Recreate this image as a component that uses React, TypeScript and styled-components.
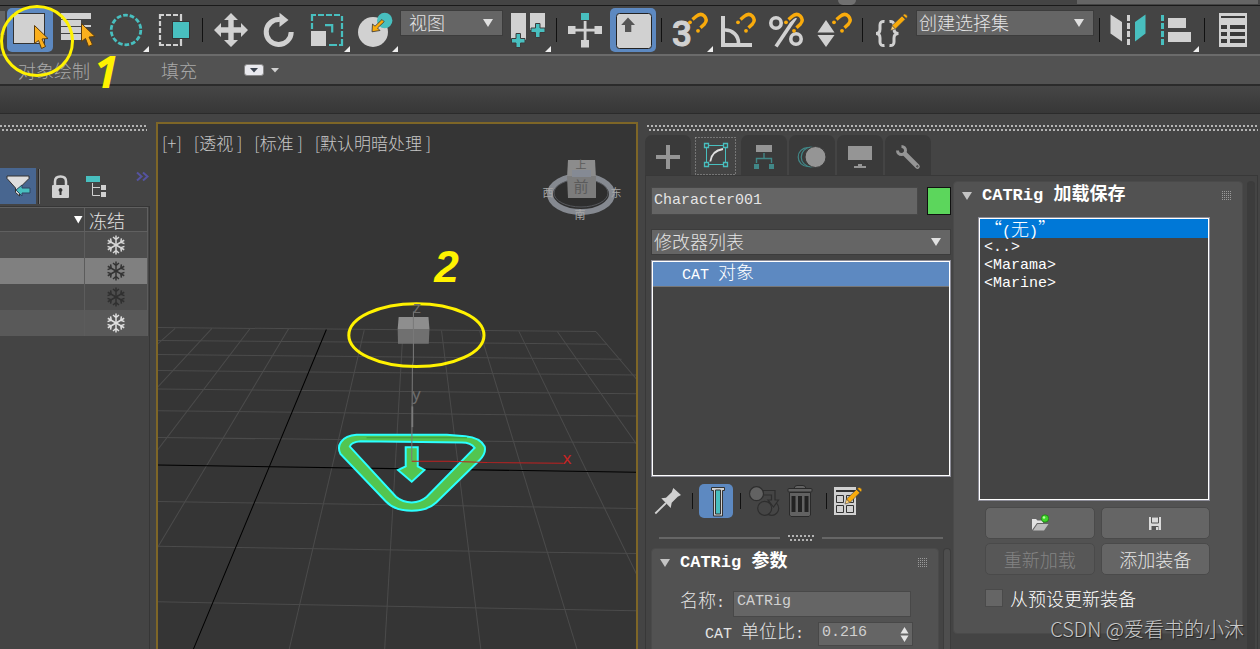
import React from "react";
import styled, { createGlobalStyle, css } from "styled-components";

const c = {
  base: "#444444",
  raised: "#525252",
  field: "#656565",
  edge: "#383838",
  light: "#d1d1d1",
  teal: "#48bfbf",
  orange: "#fbaf1c",
  amber: "#f9ab0c",
  blue: "#5d89c1",
  dim: "#959595",
  yellow: "#fff200",
};

const sans = `"Noto Sans CJK SC", "Noto Sans", sans-serif`;
const mono = `"Liberation Mono", "Noto Sans CJK SC", monospace`;

const GlobalStyle = createGlobalStyle`
  *, *::before, *::after { box-sizing: border-box; }
  body { margin: 0; background: ${c.base}; color: #e4e4e4; font-family: ${mono}; font-size: 15px; }
  button, input, select { font: inherit; color: inherit; margin: 0; padding: 0; border: 0; border-radius: 0; }
  svg { display: block; flex: none; }
`;

const Page = styled.div`
  position: relative;
  display: flex;
  flex-direction: column;
  min-height: 100vh;
  overflow: hidden;
`;

/* ---------- shared pieces ---------- */

const Dots = styled.div<{ $w?: number }>`
  height: 6px;
  width: ${(p) => (p.$w ? `${p.$w}px` : "auto")};
  flex: none;
  background:
    repeating-linear-gradient(90deg, #b4b4b4 0 2px, transparent 2px 4px) 0 0 / 100% 2px no-repeat,
    repeating-linear-gradient(90deg, transparent 0 2px, #b4b4b4 2px 4px) 0 4px / 100% 2px no-repeat;
`;

const Zh = styled.span`
  font-family: ${sans};
  font-size: 18px;
  font-weight: 300;
  line-height: 18px;
`;

const ToolButton = styled.button<{ $active?: boolean; $size?: "small" }>`
  flex: none;
  width: ${(p) => (p.$size ? 34 : 46)}px;
  height: ${(p) => (p.$size ? 34 : 44)}px;
  border-radius: 5px;
  background: ${(p) => (p.$active ? c.blue : "transparent")};
`;

const Divider = styled.span<{ $w: number; $h: number }>`
  flex: none;
  width: ${(p) => p.$w}px;
  height: ${(p) => p.$h}px;
  background: linear-gradient(#111, #111) center / 1px 100% no-repeat;
`;

const SelectFrame = styled.span<{ $w?: number; $h: number }>`
  display: grid;
  align-items: start;
  flex: none;
  width: ${(p) => (p.$w ? `${p.$w}px` : "100%")};
  height: ${(p) => p.$h}px;
  background: ${c.field};
  border: 1px solid #3c3c3c;
  & > * { grid-area: 1 / 1; }
  & > svg { place-self: center end; margin-right: 9px; pointer-events: none; }
`;

const NativeSelect = styled.select<{ $pad: number }>`
  appearance: none;
  width: 100%;
  height: 22px;
  padding-left: ${(p) => p.$pad}px;
  background: transparent;
  font-family: ${sans};
  font-size: 18px;
  font-weight: 300;
  line-height: 22px;
`;

function Select({ label, value, w, h, pad }: { label: string; value: string; w?: number; h: number; pad: number }) {
  return (
    <SelectFrame $w={w} $h={h}>
      <NativeSelect aria-label={label} $pad={pad} defaultValue={value}>
        <option>{value}</option>
      </NativeSelect>
      <svg width="10" height="8" viewBox="0 0 10 8"><path d="M0 0H10L5 8Z" fill="#e0e0e0" /></svg>
    </SelectFrame>
  );
}

/* ---------- icon fragments ---------- */

const Cursor = ({ x = 0, y = 0 }) => (
  <path transform={`translate(${x} ${y})`} d="M27.500 17.500V35.500L31.500 32.500L34.500 40.500L38.500 38.500L35 31L41 30.500Z" fill={c.orange} stroke="#5a3c10" />
);
const Corner = () => <path d="M46 38V44H40Z" fill="#eee" />;
const Magnet = () => (
  <g fill={c.amber}>
    <path d="M25.500 12L29.500 8.500Q33.500 5.500 37 8Q40.500 12 37.500 16L32.500 20.500" fill="none" stroke="#444" strokeWidth="5.500" />
    <path d="M25.500 11.500L29 8.500Q33.500 4.500 37.300 8Q41 12 37.500 16L33.500 19.700" fill="none" stroke={c.amber} strokeWidth="3.400" />
    <circle cx="23" cy="14.300" r="1.900" />
    <circle cx="31" cy="22.800" r="1.900" />
  </g>
);
const Pencil = ({ x, y }: { x: number; y: number }) => (
  <g transform={`translate(${x} ${y})`} stroke="#444" strokeWidth=".6">
    <path d="M0 0L1.500 -5L5 -1.500Z" fill="#ffd27a" />
    <path d="M1.500 -5L11.500 -14.500L14.800 -11.200L5 -1.500Z" fill={c.amber} />
    <path d="M12.300 -15.300Q14 -17.500 16 -15.800Q18 -14 15.800 -12Z" fill={c.amber} />
  </g>
);

const IconFrame = styled.svg`
  overflow: visible;
`;
const Icon = ({ children }: { children: React.ReactNode }) => (
  <IconFrame width="46" height="44" viewBox="0 0 46 44" fill={c.light}>{children}</IconFrame>
);

type Tool = { name: string; active?: boolean; icon: React.ReactNode };

const selectTools: Tool[] = [
  { name: "选择对象", active: true, icon: <><rect x="6.500" y="5.500" width="31" height="30" stroke="#333" /><Cursor /></> },
  { name: "按名称选择", icon: <><path d="M6 5H36V11H6ZM6 12H26V18H6ZM6 19H26V25H6ZM6 26H26V32H6ZM27 17H36V19H27Z" /><Cursor x={-1} y={-2} /></> },
  { name: "圆形选择区域", icon: <><circle cx="23" cy="22" r="14.800" fill="none" stroke={c.teal} strokeWidth="2.800" strokeDasharray="4.700 1.942" /><Corner /></> },
  {
    name: "窗口/交叉",
    icon: <>
      <path d="M13 7H9V11M9 13V18M9 20V25M9 27V32M9 34V37H13M15 37H20M22 37H27M29 37H30V31M15 7H20M22 7H27M29 7H30V13" fill="none" stroke={c.light} strokeWidth="2.200" />
      <rect x="21.500" y="13.500" width="17" height="17" fill={c.teal} stroke="#333" />
    </>,
  },
];

const transformTools: Tool[] = [
  { name: "移动", icon: <path d="M23 5L30 12H25.700V19.300H33V15L40 22L33 29V24.700H25.700V32H30L23 39L16 32H20.300V24.700H13V29L6 22L13 15V19.300H20.300V12H16Z" /> },
  { name: "旋转", icon: <><path d="M35.200 24A12.500 12.500 0 1 1 24 11.600" fill="none" stroke={c.light} strokeWidth="5" /><path d="M23.500 4.700L32.500 12L23.500 19Z" /></> },
  {
    name: "缩放",
    icon: <>
      <path d="M8 21V15M8 13V7H12M14 7H20M22 7H28M30 7H36M38 8V13M38 15V21M38 23V29M38 31V37H35M33 37H25" fill="none" stroke={c.teal} strokeWidth="2.200" />
      <rect x="7" y="23" width="15" height="15" />
      <path d="M21 17.200H28.200V24.500" fill="none" stroke={c.teal} strokeWidth="2.200" /><Corner />
    </>,
  },
  {
    name: "放置",
    icon: <>
      <circle cx="21" cy="24" r="15" /><circle cx="32.700" cy="12.500" r="7.700" fill={c.teal} />
      <path d="M30 11.500L32.200 13.700L25.500 20L28 22.500L20 23.800L20.500 16L23 18.200Z" fill={c.amber} stroke="#333" strokeWidth=".8" /><Corner />
    </>,
  },
];

const pivotTools: Tool[] = [
  {
    name: "使用轴点中心",
    icon: <>
      <path d="M6 5H21V32H6ZM25 5H40V22H25Z" />
      <g fill={c.teal} stroke="#3c3c3c">
        <path d="M11 25.500H15.500V30.500H20V35H15.500V39.500H11V35H6.500V30.500H11Z" />
        <path d="M30.500 15.500H35V20H40V24.500H35V29.500H30.500V24.500H26V20H30.500Z" />
      </g>
      <Corner />
    </>,
  },
];

const manipulateTools: Tool[] = [
  { name: "选择并操纵", icon: <><path d="M6 18H13.500V20.700H21.700V13H24.500V20.700H32.500V18H40V26H32.500V23.500H24.500V32H27V39.500H19V32H21.700V23.500H13.500V26H6Z" /><rect x="19" y="5" width="8" height="7" fill={c.teal} /></> },
  { name: "键盘快捷键覆盖", active: true, icon: <><rect x="6.500" y="5.500" width="35" height="35" rx="3" stroke="#222" /><path d="M18 9.500L25 17H21.300V24H15V17H11.200Z" fill="#555" /></> },
];

const Digit = styled.text`
  font: 500 35px Roboto, "Liberation Sans", sans-serif;
`;

const snapTools: Tool[] = [
  { name: "捕捉开关", icon: <><Digit x="5" y="38" stroke={c.light}>3</Digit><Magnet /><Corner /></> },
  { name: "角度捕捉", icon: <><path d="M6 8H10V35H37V39H6Z" /><path d="M10 22A13 13 0 0 1 23.500 35" fill="none" stroke={c.light} strokeWidth="3.600" /><Magnet /></> },
  { name: "百分比捕捉", icon: <><g fill="none" stroke={c.light} strokeWidth="3.600"><circle cx="13" cy="15" r="5.200" /><circle cx="33" cy="31" r="5.200" /><path d="M13 38.500L32.500 9.500" /></g><Magnet /></> },
  { name: "微调器捕捉", icon: <><path d="M15 12L23.500 24.500H6.500ZM6.500 27H23.500L15 39Z" /><Magnet /></> },
];

const setTools: Tool[] = [
  {
    name: "管理选择集",
    icon: <>
      <path d="M16.500 13.500Q12 13 12 17V21Q12 25.500 8 25.500Q12 25.500 12 30V34Q12 38 16.500 37.500M21.500 13.500Q26 13 26 17V21Q26 25.500 30.500 25.500Q26 25.500 26 30V34Q26 38 21.500 37.500" fill="none" stroke={c.light} strokeWidth="3" />
      <Pencil x={22.500} y={22.500} />
    </>,
  },
];

const mirrorTools: Tool[] = [
  { name: "镜像", icon: <><path d="M5.500 6.500L17 14V33.500L5.500 25.500ZM22 7H25V13H22ZM22 15H25V21H22ZM22 23H25V29H22ZM22 31H25V37H22Z" /><path d="M40.500 6.500L30 14V33.500L40.500 25.500Z" fill={c.teal} /></> },
  { name: "对齐", icon: <><path d="M8 7H11V13H8ZM8 15H11V21H8ZM8 23H11V29H8ZM8 31H11V37H8Z" fill={c.teal} /><path d="M15 10H33V20H15ZM15 24H38V34H15Z" /><Corner /></> },
];

const layerTools: Tool[] = [
  { name: "层资源管理器", icon: <><rect x="9" y="5" width="28" height="34" /><path d="M11 8H35V10H11ZM11 17H17V21H11ZM20 17H35V21H20ZM11 24H17V28H11ZM20 24H35V28H20ZM11 31H17V35H11ZM20 31H35V35H20Z" fill="#3a3a3a" /></> },
];

const Tools = ({ items }: { items: Tool[] }) => (
  <>
    {items.map((t) => (
      <ToolButton key={t.name} aria-label={t.name} $active={t.active}><Icon>{t.icon}</Icon></ToolButton>
    ))}
  </>
);

/* ---------- top bars ---------- */

const TopStrip = styled.div`
  display: flex;
  height: 6px;
  padding-right: 2px;
  border-bottom: 1px solid #1a1a1a;
`;
const Space = styled.span<{ $grow: number }>`flex: ${(p) => p.$grow} 1 0;`;
const StripHandle = styled.span`width: 18px; height: 5px; background: #707070; border-radius: 0 0 5px 5px;`;
const StripField = styled.span`width: 181px; height: 4px; background: ${c.field};`;

const MainToolbar = styled.div`
  display: flex;
  align-items: center;
  gap: 2px;
  height: 48px;
  & > ${SelectFrame} { align-self: flex-start; margin-top: 4px; }
`;
const FieldStub = styled.span`
  align-self: flex-start;
  flex: none;
  width: 5px;
  height: 24px;
  margin-top: 5px;
  background: ${c.field};
`;
const ToolEdge = () => <Divider $w={7} $h={24} />;

const Ribbon = styled.div`
  display: flex;
  align-items: center;
  height: 32px;
  padding-left: 18px;
  background: ${c.raised};
  border-top: 2px solid #6b6b6b;
  border-bottom: 2px solid #2b2b2b;
  color: #a9a9a9;
`;
const RibbonTab = styled.button<{ $w: number }>`
  width: ${(p) => p.$w}px;
  background: transparent;
  text-align: left;
  font-family: ${sans};
  font-size: 18px;
  font-weight: 300;
  line-height: 26px;
`;
const RibbonMenu = styled.button`display: flex; align-items: center; gap: 7px; background: transparent;`;
const RibbonBody = styled.div`
  height: 28px;
  background: linear-gradient(#464646, #373737);
  border-bottom: 1px solid #2b2b2b;
`;

/* ---------- scene explorer ---------- */

const Workspace = styled.div`
  display: flex;
  flex: 1;
  min-height: 0;
`;
const Explorer = styled.section`
  flex: none;
  width: 150px;
  display: flex;
  flex-direction: column;
  padding-top: 11px;
  & > ${Dots} { width: 147px; }
`;
const ExplorerBar = styled.div`
  display: flex;
  height: 36px;
  margin: 37px 0 2px;
`;
const ExplorerButton = styled.button<{ $active?: boolean }>`
  flex: none;
  width: 36px;
  height: 36px;
  background: ${(p) => (p.$active ? "#486690" : "transparent")};
`;
const ExplorerEdge = styled.span`width: 2px; margin: 1px 1px 0 2px; background: #2a2a2a; border-right: 1px solid #777;`;
const More = styled.button`
  width: 14px;
  height: 16px;
  margin-left: 23px;
  background: transparent;
  align-self: flex-start;
`;
const ExplorerBody = styled.div`
  flex: 1;
  border: solid #363636;
  border-width: 1px 1px 0 0;
`;
const Objects = styled.table`
  width: 148px;
  border-collapse: separate;
  border-spacing: 0;
  table-layout: fixed;
  th {
    height: 25px;
    padding: 0 4px;
    border: 1px solid #606060;
    border-left: 0;
    text-align: left;
    font-family: ${sans};
    font-size: 18px;
    font-weight: 300;
    line-height: 22px;
  }
  th:first-child { width: 85px; padding: 0 1px; }
  td { height: 26px; padding: 0; border-right: 1px solid #5c5c5c; }
  td svg { margin: 0 auto; }
`;
const ObjectRow = styled.tr<{ $bg: string }>`background: ${(p) => p.$bg};`;
const SortMark = styled.svg`margin-left: auto;`;

const arm = "M0 0V-9.500M-3 -8L0 -5.500L3 -8";
const Snowflake = ({ color }: { color: string }) => (
  <svg width="22" height="22" viewBox="-11 -11 22 22" fill="none" stroke={color} strokeWidth="1.500">
    {[0, 60, 120, 180, 240, 300].map((a) => <path key={a} d={arm} transform={`rotate(${a})`} />)}
  </svg>
);

/* ---------- viewport ---------- */

const Viewport = styled.section`
  position: relative;
  flex: 1;
  min-width: 0;
  margin: 8px 7px 0 6px;
  background: #353535;
  border: 2px solid #7e6627;
  border-bottom: 0;
`;
const Scene = styled.svg`
  position: absolute;
  inset: 0;
  width: 100%;
  height: 100%;
`;
const ViewLabels = styled.div`
  position: relative;
  display: flex;
  gap: 12px;
  padding: 8px 0 0 4px;
  color: #c6c6c6;
  font-family: ${sans};
  font-size: 17px;
  font-weight: 300;
  line-height: 22px;
  white-space: nowrap;
`;
const ViewCube = styled.svg`
  position: absolute;
  top: 30px;
  right: 10px;
  font: 11px ${sans};
`;
const AxisName = styled.text`font: 17px "Noto Sans", sans-serif;`;
const Callout = styled.text`
  font: italic bold 44px "Liberation Sans", sans-serif;
  fill: ${c.yellow};
`;
const SlimCallout = styled(Callout)`
  font-family: "Open Sans", "Noto Sans", sans-serif;
`;

const rows = [
  [82, 94.5], [121, 132], [163, 177], [211, 224], [266, 280], [331, 347], [411, 427], [602, 623], [736, 758], [902, 929],
];
const columns = [
  [78, 85, 24, 133], [188, 85, 24, 262], [302, 85, 24, 450], [417, 86, 24, 742], [643, 90, 418, 1047], [759, 90, 704, 1047],
  [874, 91, 992, 1047], [988, 92, 1280, 1047], [1105, 93, 1458, 822], [1220, 94, 1458, 432], [1336, 95, 1458, 238],
];

const SceneDrawing = () => (
  <Scene viewBox="0 0 478 525" preserveAspectRatio="xMidYMin slice" aria-label="透视视口">
    {/* geometry is plotted in thirds of a scene unit */}
    <svg width="478" height="525" viewBox="24 -526 1434 1575" fill="none" strokeWidth="3">
      <g stroke="#4b4b4b">
        {rows.map(([a, b], i) => <path key={a} d={`M24 ${a}L${[1336, 1370, 1412][i] ?? 1458} ${b}`} />)}
        {columns.map(([a, b, d, e]) => <path key={a} d={`M${a} ${b}L${d} ${e}`} />)}
      </g>
      <path d="M530 88L131 1047M24 493L1458 515" stroke="#000" />
      <path d="M746 51H835L838 87H743Z" fill="#8e8e8e" />
      <path d="M743 87H838L836 131H744Z" fill="#707070" />
      <path
        fillRule="evenodd"
        fill="#53c550"
        stroke="#2bffff"
        strokeWidth="6"
        d="M620 403H890L945 407Q990 411 1003 438Q1008 458 988 478L858 605Q832 630 785 630Q735 630 708 602L572 460Q562 440 574 424Q588 405 620 403ZM632 422Q604 424 600 438L738 588Q758 605 785 605Q812 604 830 588L973 442Q962 426 935 426Z"
      />
      <path d="M650 412H950" stroke="#3f9a3d" />
      <path d="M767 440H803V497L823 508L785 543L744 508L767 497Z" fill="#53c550" stroke="#2bffff" strokeWidth="6" />
      <path d="M790 34V180L787 200L785 480" stroke="#7a7a7a" />
      <path d="M787 318V380" stroke="#7a7a7a" strokeWidth="5" />
      <path d="M785 482H895L1010 486L1238 488" stroke="#c02020" />
      <ellipse cx="799" cy="105" rx="202" ry="94" stroke={c.yellow} strokeWidth="9" />
    </svg>
    <AxisName x="255" y="188" fill="#6c6c6c">z</AxisName>
    <AxisName x="254" y="275" fill="#6c6c6c">y</AxisName>
    <AxisName x="404" y="339" fill="#c62424">x</AxisName>
    <Callout x="276" y="157">2</Callout>
  </Scene>
);

/* ---------- command panel ---------- */

const CommandPanel = styled.section`
  flex: none;
  width: 615px;
  display: flex;
  flex-direction: column;
  padding-top: 11px;
  & > ${Dots} { margin: 0 2px; }
`;
const Tabs = styled.div`
  display: flex;
  gap: 2px;
  height: 45px;
  margin-right: 2px;
  padding-top: 4px;
  border-bottom: 1px solid ${c.edge};
`;
const Tab = styled.button<{ $active?: boolean }>`
  width: 46px;
  height: 40px;
  border-radius: 7px 7px 0 0;
  background: ${(p) => (p.$active ? c.base : "#3a3a3a")};
`;
const PanelBody = styled.div`
  display: flex;
  flex: 1;
  gap: 2px;
  padding: 5px 2px 0 5px;
  margin-right: 2px;
  border: solid ${c.edge};
  border-width: 0 1px;
`;
const ModifyColumn = styled.div`
  flex: none;
  width: 300px;
  display: flex;
  flex-direction: column;
  padding-top: 6px;
`;
const fieldStyle = css`
  background: ${c.field};
  border: 1px solid #484848;
  padding: 0 3px;
  line-height: 20px;
`;
const NameRow = styled.div`
  display: flex;
  gap: 9px;
  height: 28px;
  margin-bottom: 14px;
`;
const NameInput = styled.input`${fieldStyle} flex: 1; min-width: 0; padding: 0 2px;`;
const Swatch = styled.button`width: 24px; background: #5cd65c; border: 1px solid #111;`;
const whiteFrame = css`
  border: 1px solid #8d8d98;
  outline: 1px solid #fff;
  outline-offset: -2px;
  padding: 1px;
`;
const Stack = styled.ul`
  ${whiteFrame}
  height: 217px;
  margin: 5px 0 7px;
  list-style: none;
`;
const StackItem = styled.li`
  height: 25px;
  padding-left: 29px;
  background: ${c.blue};
  border-bottom: 1px solid #777;
  color: #fff;
  line-height: 24px;
  white-space: pre;
`;
const StackTools = styled.div`display: flex; align-items: center; gap: 4px;`;
const Splitter = styled.div`
  display: flex;
  align-items: center;
  gap: 8px;
  margin: 17px 8px 7px;
  &::before, &::after { content: ""; flex: 1; height: 2px; background: #666; }
`;
const RolloutArea = styled.div<{ $grow?: boolean }>`
  display: flex;
  align-items: ${(p) => (p.$grow ? "stretch" : "flex-start")};
  gap: 4px;
  flex: 1;
`;
const Rollout = styled.section<{ $open?: boolean }>`
  flex: 1;
  min-width: 0;
  background: ${c.raised};
  border: 1px solid #4a4a4a;
  border-radius: ${(p) => (p.$open ? "4px 4px 0 0" : "4px")};
`;
const ScrollTrack = styled.div<{ $bg: string }>`
  flex: none;
  align-self: stretch;
  width: 8px;
  border-radius: 4px 4px 0 0;
  background: ${(p) => p.$bg};
  border: 1px solid #3c3c3c;
  border-bottom: 0;
`;
const RolloutHead = styled.header`
  display: flex;
  align-items: center;
  height: 28px;
  padding: 0 10px 0 8px;
`;
const RolloutTitle = styled.h2`
  flex: 1;
  margin: 0 0 0 10px;
  color: #fff;
  font-size: 17px;
  font-weight: bold;
  line-height: 28px;
  white-space: pre;
  span { font-family: ${sans}; font-size: 18px; line-height: 18px; }
`;
const Grip = styled.span`
  width: 10px;
  height: 10px;
  background:
    repeating-linear-gradient(90deg, transparent 0 1px, ${c.raised} 1px 2px),
    repeating-linear-gradient(#9a9a9a 0 1px, transparent 1px 2px);
`;

const Head = ({ latin, zh }: { latin: string; zh: string }) => (
  <RolloutHead>
    <svg width="10" height="8" viewBox="0 0 10 8"><path d="M0 0H10L5 8Z" fill="#c4c4c4" /></svg>
    <RolloutTitle>{latin} <span>{zh}</span></RolloutTitle>
    <Grip />
  </RolloutHead>
);

const Params = styled.div`
  display: grid;
  gap: 6px;
  padding: 14px 28px 4px 28px;
`;
const Param = styled.label<{ $indent?: boolean }>`
  display: flex;
  align-items: center;
  justify-content: flex-end;
  gap: ${(p) => (p.$indent ? 14 : 8)}px;
  height: ${(p) => (p.$indent ? 24 : 25)}px;
  margin-right: ${(p) => (p.$indent ? 0 : 2)}px;
  line-height: 26px;
  white-space: pre;
`;
const ParamInput = styled.input`${fieldStyle} width: 178px; height: 26px; color: #d0d0d0; padding-bottom: 4px;`;
const SpinnerField = styled.span`
  ${fieldStyle}
  display: flex;
  align-items: center;
  width: 95px;
  height: 24px;
  input { width: 70px; background: transparent; color: #d0d0d0; padding-bottom: 3px; line-height: 20px; }
  svg { margin-left: auto; }
`;

const RigBox = styled.div`
  display: flex;
  flex-direction: column;
  padding: 7px 32px 26px 24px;
`;
const RigList = styled.ul`
  ${whiteFrame}
  height: 284px;
  margin: 0;
  list-style: none;
  background: ${c.base};
`;
const RigItem = styled.li<{ $active?: boolean }>`
  height: ${(p) => (p.$active ? 19 : 18)}px;
  padding-left: 4px;
  color: #fff;
  line-height: ${(p) => (p.$active ? 16 : 20)}px;
  background: ${(p) => (p.$active ? "#0078d7" : "transparent")};
`;
const RigButtons = styled.div`
  display: grid;
  grid-template-columns: 1fr 1fr;
  gap: 4px 6px;
  margin: 6px 0 14px 7px;
`;
const RigButton = styled.button`
  display: grid;
  place-items: center;
  height: 32px;
  background: ${c.field};
  border: 1px solid #4a4a4a;
  border-radius: 5px;
  font-family: ${sans};
  font-size: 18px;
  font-weight: 300;
  line-height: 26px;
  &:disabled { background: #575757; color: #838383; }
`;
const CheckRow = styled.label`
  display: flex;
  align-items: center;
  gap: 7px;
  height: 18px;
  margin-left: 7px;
  color: #fff;
  line-height: 18px;
  input { appearance: none; width: 18px; height: 18px; background: ${c.field}; border: 1px solid #4a4a4a; }
`;

/* ---------- overlays ---------- */

const FirstCallout = styled.svg`
  position: absolute;
  left: 0;
  top: 0;
  pointer-events: none;
`;
const Watermark = styled.span`
  position: absolute;
  right: 16px;
  bottom: 8px;
  color: #c9c9c9;
  font-family: ${sans};
  font-size: 20px;
  font-weight: 300;
  line-height: 28px;
  text-shadow: 1px 1px 1px #222;
`;

const tabs: Tool[] = [
  { name: "创建", icon: <path d="M21 10H25V20H35V24H25V34H21V24H11V20H21Z" fill={c.dim} /> },
  {
    name: "修改", active: true,
    icon: <>
      <rect x="2.500" y="2.500" width="40" height="37" fill="none" stroke="#a8a8a8" strokeDasharray="1 2" />
      <g fill="none" stroke={c.teal}><path d="M13.500 10.500H32.500V29.500H13.500Z" /><g fill={c.base} strokeWidth="1.300"><path d="M11.500 8.500H15.500V12.500H11.500ZM30.500 8.500H34.500V12.500H30.500ZM11.500 27.500H15.500V31.500H11.500ZM30.500 27.500H34.500V31.500H30.500Z" /></g></g>
      <path d="M17.300 26.500Q18.500 16 30 14" fill="none" stroke="#e0e0e0" strokeWidth="1.800" />
    </>,
  },
  { name: "层次", icon: <><path d="M15 10H31V17H15Z" fill={c.dim} /><path d="M23 18V23.500M15.500 28V23.500H30.500V28" fill="none" stroke="#418787" strokeWidth="1.400" /><path d="M13 29H18V34H13ZM28 29H33V34H28Z" fill="#418787" /></> },
  { name: "运动", icon: <><g fill="none" stroke="#418787" strokeWidth="1.200"><circle cx="18.500" cy="22" r="9.300" /><circle cx="22" cy="22" r="9.800" fill="#3a3a3a" /></g><circle cx="26.500" cy="22" r="10.500" fill={c.dim} stroke="#3a3a3a" /></> },
  { name: "显示", icon: <path d="M11 11H35V25H11ZM21 29H25V31H29V33H17V31H21Z" fill={c.dim} /> },
  { name: "实用程序", icon: <g fill="none" stroke={c.dim}><path d="M16.500 11.500A4 4 0 1 1 12.500 15.500" strokeWidth="3" /><path d="M20 19L32.500 31.500" strokeWidth="4.600" strokeLinecap="round" /><circle cx="32.300" cy="31.300" r=".7" stroke="#3a3a3a" /></g> },
];

const SmallIcon = ({ children }: { children: React.ReactNode }) => (
  <svg width="34" height="34" viewBox="0 0 34 34" fill={c.light}>{children}</svg>
);

export default function App() {
  return (
    <Page>
      <GlobalStyle />
      <TopStrip><Space $grow={838} /><StripHandle /><Space $grow={221} /><StripField /></TopStrip>
      <MainToolbar>
        <FieldStub />
        <Tools items={selectTools} />
        <ToolEdge />
        <Tools items={transformTools} />
        <Select label="参考坐标系" value="视图" w={103} h={26} pad={8} />
        <Tools items={pivotTools} />
        <ToolEdge />
        <Tools items={manipulateTools} />
        <ToolEdge />
        <Tools items={snapTools} />
        <ToolEdge />
        <Tools items={setTools} />
        <Select label="命名选择集" value="创建选择集" w={178} h={26} pad={2} />
        <ToolEdge />
        <Tools items={mirrorTools} />
        <ToolEdge />
        <Tools items={layerTools} />
      </MainToolbar>
      <Ribbon>
        <RibbonTab $w={143}>对象绘制</RibbonTab>
        <RibbonTab $w={83}>填充</RibbonTab>
        <RibbonMenu aria-label="功能区选项">
          <svg width="20" height="12" viewBox="0 0 20 12"><rect x=".5" y=".5" width="19" height="11" rx="2.500" fill="#e9e9ee" stroke="#888" /><path d="M6 4H14L10 8.500Z" fill="#3c4450" /></svg>
          <svg width="8" height="5" viewBox="0 0 8 5"><path d="M0 0H8L4 4.500Z" fill="#d0d0d0" /></svg>
        </RibbonMenu>
      </Ribbon>
      <RibbonBody />

      <Workspace>
        <Explorer>
          <Dots />
          <ExplorerBar>
            <ExplorerButton $active aria-label="过滤器">
              <svg width="36" height="36" viewBox="0 0 36 36"><path d="M7 8H29V10.500L19.500 20V28L15.500 24.500V20L7 10.500Z" fill="#ddd" stroke="#333" /><path d="M16 22L22 17V20H30V25H22V28Z" fill={c.teal} stroke="#2f4562" /></svg>
            </ExplorerButton>
            <ExplorerEdge />
            <ExplorerButton aria-label="锁定">
              <svg width="36" height="36" viewBox="0 0 36 36"><path d="M14 18V13.500Q14 8.500 19.500 8.500T25 13.500V18" fill="none" stroke={c.light} strokeWidth="2.500" /><rect x="11" y="17" width="17" height="13" rx="1" fill={c.light} /><path d="M19.500 20a2 2 0 0 1 1 3.700V27H18.500V23.700A2 2 0 0 1 19.500 20Z" fill="#333" /></svg>
            </ExplorerButton>
            <ExplorerButton aria-label="层次显示">
              <svg width="36" height="36" viewBox="0 0 36 36"><rect x="9" y="8" width="14" height="6" fill={c.teal} /><path d="M15.500 15V27.500H23M15.500 19.500H23" fill="none" stroke={c.light} /><path d="M24 17H29V22H24ZM24 24H29V29H24Z" fill={c.light} /></svg>
            </ExplorerButton>
            <More aria-label="更多">
              <svg width="14" height="16" viewBox="0 0 14 16"><path d="M1 4.500L5.500 8.500L1 12.500M7 4.500L11.500 8.500L7 12.500" fill="none" stroke="#5553a0" strokeWidth="2" /></svg>
            </More>
          </ExplorerBar>
          <ExplorerBody>
            <Objects>
              <thead>
                <tr>
                  <th aria-label="名称"><SortMark width="9" height="8" viewBox="0 0 9 8"><path d="M0 0H8.500L4.300 7.500Z" fill="#fff" /></SortMark></th>
                  <th>冻结</th>
                </tr>
              </thead>
              <tbody>
                <ObjectRow $bg="#4d4d4d"><td /><td><Snowflake color="#d6d6d6" /></td></ObjectRow>
                <ObjectRow $bg="#808080"><td /><td><Snowflake color="#333" /></td></ObjectRow>
                <ObjectRow $bg="#4d4d4d"><td /><td><Snowflake color="#303030" /></td></ObjectRow>
                <ObjectRow $bg="#595959"><td /><td><Snowflake color="#e0e0e0" /></td></ObjectRow>
              </tbody>
            </Objects>
          </ExplorerBody>
        </Explorer>

        <Viewport>
          <SceneDrawing />
          <ViewLabels><span>[+]</span><span>[透视 ]</span><span>[标准 ]</span><span>[默认明暗处理 ]</span></ViewLabels>
          <ViewCube width="84" height="72" viewBox="0 0 84 72" textAnchor="middle">
            <ellipse cx="39" cy="40" rx="31" ry="18" fill="#2e2e2e" stroke="#858990" strokeWidth="6" />
            <ellipse cx="39" cy="39" rx="27" ry="14" fill="none" stroke="#55575b" />
            <path d="M26 6H53L54 24H25Z" fill="#8c8c8c" />
            <path d="M25 22H54V44H26Z" fill="#7c7c7c" />
            <path d="M30 16H49V23H30Z" fill="#858a94" />
            <g fill="#5b5b5b">
              <text x="39" y="15">上</text>
              <text x="39" y="38" fontSize="15">前</text>
            </g>
            <g fill="#a6a6a6">
              <text x="38" y="65">南</text>
              <text x="74" y="43">东</text>
              <text x="6" y="43">西</text>
            </g>
          </ViewCube>
        </Viewport>

        <CommandPanel>
          <Dots />
          <Tabs>
            {tabs.map((t) => (
              <Tab key={t.name} aria-label={t.name} $active={t.active}>
                <svg width="46" height="40" viewBox="0 0 46 40">{t.icon}</svg>
              </Tab>
            ))}
          </Tabs>
          <PanelBody>
            <ModifyColumn>
              <NameRow>
                <NameInput aria-label="对象名称" defaultValue="Character001" />
                <Swatch aria-label="对象颜色" />
              </NameRow>
              <Select label="修改器列表" value="修改器列表" h={26} pad={2} />
              <Stack><StackItem>CAT <Zh>对象</Zh></StackItem></Stack>
              <StackTools>
                <ToolButton $size="small" aria-label="锁定堆栈"><SmallIcon><path d="M22.300 4L30 11L26.700 12.700L20.700 18.700L19.700 24L10.300 14.300L15 13.700L20.700 8.300Z" /><path d="M4.300 29.500L15 19" stroke={c.light} strokeWidth="1.800" /></SmallIcon></ToolButton>
                <Divider $w={6} $h={16} />
                <ToolButton $size="small" $active aria-label="显示最终结果"><SmallIcon><path d="M12.500 3.500H25.500V6.500H23.500V32H14.500V6.500H12.500Z" stroke="#333" /><path d="M16.500 6H21.500V30H16.500Z" fill={c.teal} stroke="#333" /></SmallIcon></ToolButton>
                <Divider $w={6} $h={16} />
                <ToolButton $size="small" aria-label="使唯一"><SmallIcon><g fill="#454545" stroke="#2e2e2e" strokeWidth="1.200"><circle cx="24.700" cy="24.300" r="7" /><circle cx="17.700" cy="24.300" r="7" /><path d="M16 6.500H28V16H31.500L26.500 23L21 16H24.500V11H16Z" /><circle cx="9.500" cy="9.700" r="7" fill="#626262" /></g></SmallIcon></ToolButton>
                <ToolButton $size="small" aria-label="移除修改器"><SmallIcon><g fill="#626262" stroke="#2a2a2a"><path d="M9 4.500Q9.500 1.500 12 1.500H18Q20.500 1.500 21 4.500" /><rect x="3" y="4.500" width="24" height="3.500" rx="1" /><path d="M4.500 8.500H25.500V31L24 32.500H6L4.500 31Z" /></g><path d="M6.500 12H10.500V28H6.500ZM13 12H17V28H13ZM19.500 12H23.500V28H19.500Z" fill="#222" /></SmallIcon></ToolButton>
                <Divider $w={6} $h={16} />
                <ToolButton $size="small" aria-label="配置修改器集"><SmallIcon><path d="M1 3H23V31H1Z" /><path d="M3 6H23V8H3Z" fill="#333" /><path d="M3.500 11.500H10.500V18.500H3.500ZM13.500 11.500H20.500V18.500H13.500ZM3.500 21.500H10.500V28.500H3.500ZM13.500 21.500H20.500V28.500H13.500Z" fill="none" stroke="#333" /><Pencil x={12} y={20} /></SmallIcon></ToolButton>
              </StackTools>
              <Splitter><Dots $w={26} /></Splitter>
              <RolloutArea $grow>
                <Rollout $open>
                  <Head latin="CATRig" zh="参数" />
                  <Params>
                    <Param><span><Zh>名称</Zh>:</span><ParamInput defaultValue="CATRig" /></Param>
                    <Param $indent>
                      <span>CAT <Zh>单位比</Zh>:</span>
                      <SpinnerField>
                        <input defaultValue="0.216" />
                        <svg width="9" height="15" viewBox="0 0 9 15"><path d="M4.500 0L8.500 6.500H.5ZM.5 8.500H8.500L4.500 15Z" fill="#e4e4e4" /></svg>
                      </SpinnerField>
                    </Param>
                  </Params>
                </Rollout>
                <ScrollTrack $bg="#4e4e4e" />
              </RolloutArea>
            </ModifyColumn>
            <RolloutArea>
              <Rollout>
                <Head latin="CATRig" zh="加载保存" />
                <RigBox>
                  <RigList>
                    <RigItem $active><Zh>“</Zh>(<Zh>无</Zh>)<Zh>”</Zh></RigItem>
                    <RigItem>&lt;..&gt;</RigItem>
                    <RigItem>&lt;Marama&gt;</RigItem>
                    <RigItem>&lt;Marine&gt;</RigItem>
                  </RigList>
                  <RigButtons>
                    <RigButton aria-label="打开">
                      <svg width="18" height="18" viewBox="0 0 18 18"><path d="M1 5H5L6.500 6.500H12V9H6L1 16Z" fill="#e2e2e2" /><path d="M6.500 10H17.500L13 16.500H2Z" fill="#bdbdbd" /><circle cx="14" cy="4.500" r="3.700" fill="#3fd62a" stroke="#17750d" strokeWidth=".7" /><circle cx="13" cy="3.500" r="1.200" fill="#b4ff9c" /></svg>
                    </RigButton>
                    <RigButton aria-label="保存">
                      <svg width="12" height="13" viewBox="0 0 12 13"><path d="M0 0H12V13H0Z" fill="#dadada" /><path d="M2.500 0H9.500V6H2.500Z" fill="#dadada" stroke="#555" /><path d="M2.500 9H9.500V13H2.500Z" fill="#555" /><path d="M7 10H9V13H7Z" fill="#dadada" /></svg>
                    </RigButton>
                    <RigButton disabled>重新加载</RigButton>
                    <RigButton>添加装备</RigButton>
                  </RigButtons>
                  <CheckRow><input type="checkbox" /><Zh>从预设更新装备</Zh></CheckRow>
                </RigBox>
              </Rollout>
              <ScrollTrack $bg="#3c3c3c" />
            </RolloutArea>
          </PanelBody>
        </CommandPanel>
      </Workspace>

      <FirstCallout width="130" height="100" viewBox="0 0 130 100">
        <ellipse cx="37" cy="41" rx="35.500" ry="34.500" fill="none" stroke={c.yellow} strokeWidth="3" />
        <SlimCallout x="94" y="88">1</SlimCallout>
      </FirstCallout>
      <Watermark>CSDN @爱看书的小沐</Watermark>
    </Page>
  );
}
